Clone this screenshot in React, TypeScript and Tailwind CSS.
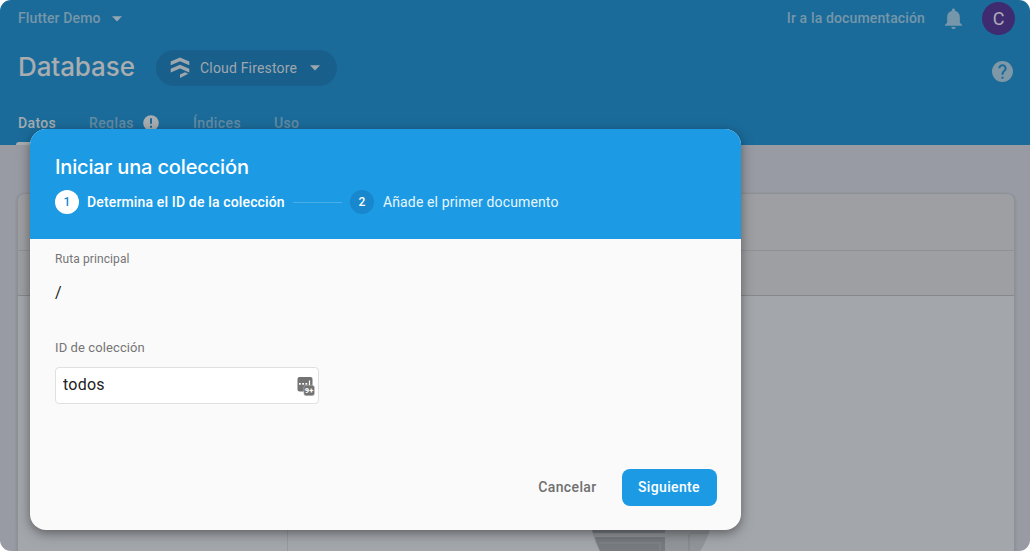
import React from "react";

function Caret({ className = "" }: { className?: string }) {
  return (
    <svg className={className} width="10" height="6" viewBox="0 0 10 6" fill="currentColor">
      <path d="M0 .3h10L5 5.5z" />
    </svg>
  );
}

function FirestoreIcon() {
  return (
    <svg width="20" height="22" viewBox="0 0 20 22" fill="currentColor">
      <path d="M10 .5l9.300 4v3.800L10 4.300.7 8.300V4.500z" />
      <path d="M10 7.800l9.300 4v3.800L10 11.600.7 15.600v-3.800z" />
      <path d="M10 17.600l5-2.300 3.200 1.400-8.200 4.400z" />
    </svg>
  );
}

function BellIcon() {
  return (
    <svg width="17" height="21" viewBox="4 2 16 20" preserveAspectRatio="none" fill="currentColor">
      <path d="M12 22c1.1 0 2-.9 2-2h-4c0 1.1.89 2 2 2zm6-6v-5c0-3.070-1.640-5.640-4.500-6.320V4c0-.83-.67-1.500-1.500-1.500s-1.500.67-1.500 1.500v.68C7.630 5.360 6 7.920 6 11v5l-2 2v1h16v-1l-2-2z" />
    </svg>
  );
}

function HelpIcon() {
  return (
    <svg width="21" height="21" viewBox="2 2 20 20" fill="currentColor">
      <path d="M12 2C6.480 2 2 6.480 2 12s4.480 10 10 10 10-4.480 10-10S17.520 2 12 2zm1 17h-2v-2h2v2zm2.070-7.750l-.9.920C13.450 12.900 13 13.500 13 15h-2v-.5c0-1.100.450-2.100 1.170-2.830l1.240-1.260c.370-.360.590-.860.590-1.410 0-1.100-.9-2-2-2s-2 .9-2 2H8c0-2.210 1.790-4 4-4s4 1.790 4 4c0 .880-.360 1.680-.930 2.250z" />
    </svg>
  );
}

function AlertIcon() {
  return (
    <svg width="16" height="16" viewBox="0 0 16 16">
      <circle cx="8" cy="8" r="7.800" fill="#a9adb0" />
      <path d="M8 3.300v5.500M8 10.700v2" stroke="#1b6b9a" strokeWidth="2" />
    </svg>
  );
}

function PasswordManagerIcon() {
  return (
    <svg width="18" height="20" viewBox="0 0 18 20">
      <rect x=".5" y="1" width="15" height="14.500" rx="2" fill="#737373" />
      <g fill="#fff">
        <rect x="2" y="7" width="1.800" height="1.700" />
        <rect x="5.200" y="7" width="1.800" height="1.700" />
        <rect x="8.400" y="7" width="1.800" height="1.700" />
        <rect x="11.900" y="4.500" width="1.200" height="5" />
      </g>
      <rect x="6.800" y="9.200" width="10.700" height="10.500" rx="2.500" fill="#737373" stroke="#d4d4d4" strokeWidth=".4" />
      <text x="7.800" y="17" fontSize="7.500" fontWeight="900" fontFamily="Roboto, sans-serif" fill="#fff">9+</text>
    </svg>
  );
}

function TopBar() {
  return (
    <header className="flex h-[145px] flex-col bg-[#1b6b9a]">
      <div className="flex h-[37px] items-center justify-between pr-[15px] pl-[18px] text-[14px] font-medium text-[#7696a9]">
        <div className="flex items-center">
          <span className="tracking-[0.12px]">Flutter Demo</span>
          <Caret className="ml-[11px] text-[#94a6b1]" />
        </div>
        <div className="flex items-center">
          <span className="tracking-[0.14px]">Ir a la documentación</span>
          <span className="ml-5"><BellIcon /></span>
          <span className="ml-5 flex size-[33px] items-center justify-center rounded-full bg-[#3e2b70] text-[18px] font-normal text-[#b0acb8]">C</span>
        </div>
      </div>
      <div className="flex h-[62px] items-center justify-between pr-[17px] pl-[18px]">
        <div className="flex items-center">
          <h1 className="w-[138px] pb-[3px] font-['Inter',sans-serif] text-[26px] leading-8 font-[450] tracking-[-0.1px] text-[#a9adb0]">Database</h1>
          <div className="flex h-9 w-[181px] items-center rounded-full bg-[#195f8c] pl-[14px] text-[#9fa7ad]">
            <FirestoreIcon />
            <span className="ml-[10px] text-[14px] tracking-[0.18px]">Cloud Firestore</span>
            <Caret className="ml-[13px]" />
          </div>
        </div>
        <span className="mt-[6px] text-[#7f98a7]"><HelpIcon /></span>
      </div>
      <nav className="flex flex-1 pt-[14px] pl-[18px] text-[14px] leading-5 font-medium text-[#628ba4]">
        <div className="flex w-[71px] flex-col justify-between text-[#a4abb0]">
          <span className="tracking-[0.35px]">Datos</span>
          <span className="-ml-0.5 h-[3px] w-10 rounded-t-[3px] bg-[#a9adb0]" />
        </div>
        <div className="flex h-5 w-[104px] items-center tracking-[0.4px]">
          Reglas <span className="ml-[9px]"><AlertIcon /></span>
        </div>
        <span className="w-[81px] tracking-[0.4px]">Índices</span>
        <span className="tracking-[0.3px]">Uso</span>
      </nav>
    </header>
  );
}

function EmptyIllustration() {
  return (
    <svg width="122" height="22" viewBox="0 0 122 22">
      <path d="M2 0h118c-2 8-6 16-10 22H10C6 16 3 8 2 0z" fill="#919498" />
      <path d="M2 0h73v4H3zM5 8h70v14H10C8 17 6 13 5 8z" fill="#777b80" />
      <path d="M9 14h61v8M99 22V7q0-3 3-3h17" fill="none" stroke="#84878c" strokeWidth="1.200" />
    </svg>
  );
}

function DataPanel() {
  return (
    <main className="min-h-0 flex-1 overflow-hidden bg-[#989ba3] pt-12 pr-[15px] pl-[17px]">
      <div className="h-full rounded-t-lg border border-b-0 border-[#8e9195] bg-[#a3a6ab] shadow-[0_1px_3px_rgba(0,0,0,0.15)]">
        <div className="h-[57px] rounded-t-lg border-b border-[#8f9296] bg-[#9d9fa3]" />
        <div className="h-[45px] border-b border-[#85888c] bg-[#9d9fa3]" />
        <div className="flex h-[calc(100%-102px)]">
          <div className="w-[270px] border-r border-[#96999d]" />
          <div className="flex flex-1 items-end pl-[302px]"><EmptyIllustration /></div>
        </div>
      </div>
    </main>
  );
}

function CollectionDialog() {
  return (
    <div role="dialog" aria-labelledby="dialog-title" className="absolute top-[129px] left-[30px] flex h-[401px] w-[711px] flex-col overflow-hidden rounded-[16px] bg-[#fafafa] shadow-[0_3px_8px_rgba(0,0,0,0.28),0_4px_16px_rgba(0,0,0,0.18)]">
      <div className="h-[110px] bg-[#1c9be4] px-[25px] pt-[26px] text-white">
        <h2 id="dialog-title" className="font-['Inter',sans-serif] text-[20px] leading-6 font-[450] tracking-[-0.15px]">Iniciar una colección</h2>
        <div className="mt-[11px] flex items-center text-[14px]">
          <span className="flex size-6 items-center justify-center rounded-full bg-white text-[12px] font-medium text-[#1687ce]">1</span>
          <span className="ml-2 w-[198px] font-medium whitespace-nowrap tracking-[0.15px]">Determina el ID de la colección</span>
          <span className="ml-2 h-px w-[49px] bg-[#49ade8]" />
          <span className="ml-2 flex size-6 items-center justify-center rounded-full bg-[#1887cd] text-[12px] font-medium">2</span>
          <span className="ml-[9px] tracking-[0.13px] text-[#e8f5fd]">Añade el primer documento</span>
        </div>
      </div>
      <div className="flex flex-1 flex-col px-[25px] pt-[11px]">
        <span className="text-[12px] leading-[18px] tracking-[0.1px] text-[#757575]">Ruta principal</span>
        <span className="mt-[13px] text-[16px] leading-6 text-[#212121]">/</span>
        <label htmlFor="collection-id" className="mt-[34px] text-[13px] leading-[18px] tracking-[0.1px] text-[#757575]">ID de colección</label>
        <div className="mt-[10px] flex h-[37px] w-[264px] items-center rounded-[4px] border border-[#e0e0e0] bg-white pr-[3px] pl-[7px]">
          <input id="collection-id" defaultValue="todos" className="min-w-0 flex-1 pb-0.5 text-[16px] tracking-[0.25px] text-[#212121] outline-none" />
          <PasswordManagerIcon />
        </div>
      </div>
      <div className="flex h-[61px] items-start justify-end pr-[24.500px] text-[14px] font-medium">
        <button className="mr-[25px] h-[37px] tracking-[0.35px] text-[#6f6f6f]">Cancelar</button>
        <button className="h-[37px] w-[95px] rounded-lg bg-[#1c9be4] tracking-[0.35px] text-white">Siguiente</button>
      </div>
    </div>
  );
}

export default function App() {
  return (
    <div className="h-[551px] w-[1030px] overflow-hidden bg-white font-['Roboto',sans-serif]">
      <div className="relative flex h-[550.500px] flex-col overflow-hidden rounded-[11px]">
        <TopBar />
        <DataPanel />
        <CollectionDialog />
      </div>
    </div>
  );
}
